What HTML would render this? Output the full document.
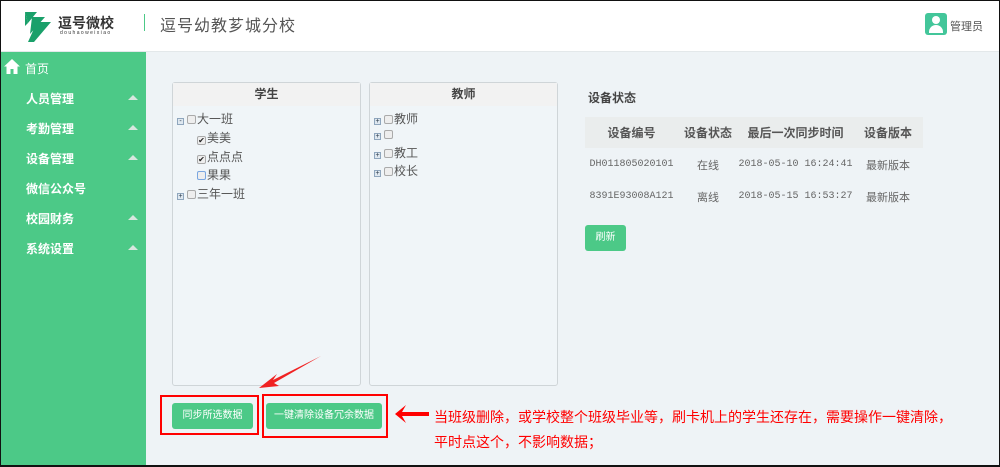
<!DOCTYPE html>
<html><head><meta charset="utf-8"><style>
*{margin:0;padding:0;box-sizing:border-box}
body{width:1000px;height:467px;overflow:hidden;font-family:"Liberation Sans","Noto Sans CJK SC",sans-serif;background:#eef3f6;position:relative}
.frame{position:absolute;left:0;top:0;width:1000px;height:467px;border:1px solid #111;border-bottom-width:2px;z-index:10;pointer-events:none}
.hdr{position:absolute;left:0;top:0;width:1000px;height:52px;background:#fff;border-bottom:1px solid #e3e8ea}
.side{position:absolute;left:0;top:52px;width:146px;height:415px;background:#4cc987}
.ab{position:absolute}
.nav{position:absolute;left:26px;color:#fff;font-size:12px;font-weight:bold}
.tri{position:absolute;left:128px;width:0;height:0;border-left:5px solid transparent;border-right:5px solid transparent;border-bottom:5px solid #d7e6de}
.panel{position:absolute;top:82px;height:304px;background:#f0f5f8;border:1px solid #cfd5d8;border-radius:3px}
.ph{height:23px;background:#f2f2f2;text-align:center;font-size:12px;font-weight:bold;color:#444;line-height:23px}
.row{position:absolute;font-size:12px;color:#555;white-space:nowrap}
.cb{display:inline-block;width:9px;height:9px;border:1px solid #aaa;background:#eee;border-radius:2px;vertical-align:-1px;margin-right:1px;font-size:8px;line-height:7px;color:#222;text-align:center}
.pm{display:inline-block;width:7px;height:7px;border:1px solid #8fa6bd;background:#dfe8f0;margin-right:3px;vertical-align:0px;font-size:7px;line-height:5px;text-align:center;color:#234}
.btn{position:absolute;background:#4cc987;color:#fff;font-size:10px;text-align:center;border-radius:3px}
.red{position:absolute;border:2px solid #f00}
td{font-size:11px;color:#666;text-align:center}
</style></head><body>
<div class="hdr">
 <svg class="ab" style="left:25px;top:10px" width="26" height="33" viewBox="0 0 26 33"><path d="M0 2h12L3 13z M7 7h13L5 24z M12 12h14L9 32H3z" fill="#1aa06a"/><path d="M0 2v14l3-3z" fill="#1aa06a"/></svg>
 <div class="ab" style="left:58px;top:13px;font-size:14px;font-weight:bold;color:#333">逗号微校</div>
 <div class="ab" style="left:60px;top:30px;font-size:5px;color:#333;letter-spacing:1.4px">douhaoweixiao</div>
 <div class="ab" style="left:144px;top:14px;width:1px;height:17px;background:#4cc987"></div>
 <div class="ab" style="left:160px;top:12px;font-size:16px;color:#555;letter-spacing:1px">逗号幼教芗城分校</div>
 <div class="ab" style="left:925px;top:13px;width:22px;height:22px;background:#43c69a;border-radius:3px"><div class="ab" style="left:7px;top:3px;width:8px;height:8px;border-radius:50%;background:#fff"></div><div class="ab" style="left:4px;top:12px;width:14px;height:8px;border-radius:7px 7px 0 0;background:#fff"></div></div>
 <div class="ab" style="left:950px;top:18px;font-size:11px;color:#555">管理员</div>
</div>
<div class="side">
 <svg class="ab" style="left:4px;top:7px" width="16" height="15" viewBox="0 0 16 15"><path d="M8 0L0 7.5h2.5V15h4v-5h3v5h4V7.5H16z" fill="#fff"/></svg>
 <div class="nav" style="left:25px;top:8px;font-weight:normal">首页</div>
 <div class="nav" style="top:38px">人员管理</div><div class="tri" style="top:43px"></div>
 <div class="nav" style="top:68px">考勤管理</div><div class="tri" style="top:73px"></div>
 <div class="nav" style="top:98px">设备管理</div><div class="tri" style="top:103px"></div>
 <div class="nav" style="top:128px">微信公众号</div>
 <div class="nav" style="top:158px">校园财务</div><div class="tri" style="top:163px"></div>
 <div class="nav" style="top:188px">系统设置</div><div class="tri" style="top:193px"></div>
</div>
<div class="panel" style="left:172px;width:189px"><div class="ph">学生</div></div>
<div class="panel" style="left:369px;width:189px"><div class="ph">教师</div></div>
<div class="row" style="left:177px;top:110px"><span class="pm">-</span><span class="cb"></span>大一班</div>
<div class="row" style="left:197px;top:129px"><span class="cb">✔</span>美美</div>
<div class="row" style="left:197px;top:148px"><span class="cb">✔</span>点点点</div>
<div class="row" style="left:197px;top:166px"><span class="cb" style="border-color:#7aa6e0"></span>果果</div>
<div class="row" style="left:177px;top:185px"><span class="pm">+</span><span class="cb"></span>三年一班</div>
<div class="row" style="left:374px;top:110px"><span class="pm">+</span><span class="cb"></span>教师</div>
<div class="row" style="left:374px;top:127px"><span class="pm">+</span><span class="cb"></span></div>
<div class="row" style="left:374px;top:144px"><span class="pm">+</span><span class="cb"></span>教工</div>
<div class="row" style="left:374px;top:162px"><span class="pm">+</span><span class="cb"></span>校长</div>
<div class="ab" style="left:588px;top:89px;font-size:12px;font-weight:bold;color:#444">设备状态</div>
<table class="ab" style="left:585px;top:117px;width:338px;border-collapse:collapse">
<tr style="background:#eaeded;height:31px"><td style="font-weight:bold;color:#555;font-size:12px;width:93px">设备编号</td><td style="font-weight:bold;color:#555;font-size:12px;width:60px">设备状态</td><td style="font-weight:bold;color:#555;font-size:12px;width:115px">最后一次同步时间</td><td style="font-weight:bold;color:#555;font-size:12px">设备版本</td></tr>
<tr style="height:33px"><td style="font-family:'Liberation Mono',monospace;font-size:10px">DH011805020101</td><td>在线</td><td style="font-family:'Liberation Mono',monospace;font-size:10px">2018-05-10 16:24:41</td><td>最新版本</td></tr>
<tr style="height:31px"><td style="font-family:'Liberation Mono',monospace;font-size:10px">8391E93008A121</td><td>离线</td><td style="font-family:'Liberation Mono',monospace;font-size:10px">2018-05-15 16:53:27</td><td>最新版本</td></tr>
</table>
<div class="btn" style="left:585px;top:225px;width:41px;height:26px;line-height:26px">刷新</div>
<div class="red" style="left:160px;top:395px;width:99px;height:40px"></div>
<div class="btn" style="left:172px;top:403px;width:81px;height:26px;line-height:26px">同步所选数据</div>
<div class="red" style="left:262px;top:394px;width:126px;height:44px"></div>
<div class="btn" style="left:266px;top:403px;width:116px;height:26px;line-height:26px">一键清除设备冗余数据</div>
<svg class="ab" style="left:255px;top:354px" width="70" height="40" viewBox="0 0 70 40"><path d="M66 2L18 26L22 20L4 34L24 32L19 29z" fill="#f02222"/></svg>
<svg class="ab" style="left:394px;top:404px" width="36" height="20" viewBox="0 0 36 20"><path d="M1 10L12 1L8 8H35V12H8L12 19z" fill="#f00"/></svg>
<div class="ab" style="left:434px;top:405px;font-size:14px;color:#f00;line-height:25px;white-space:nowrap">当班级删除，或学校整个班级毕业等，刷卡机上的学生还存在，需要操作一键清除，<br>平时点这个，不影响数据；</div>
<div class="frame"></div>
</body></html>
